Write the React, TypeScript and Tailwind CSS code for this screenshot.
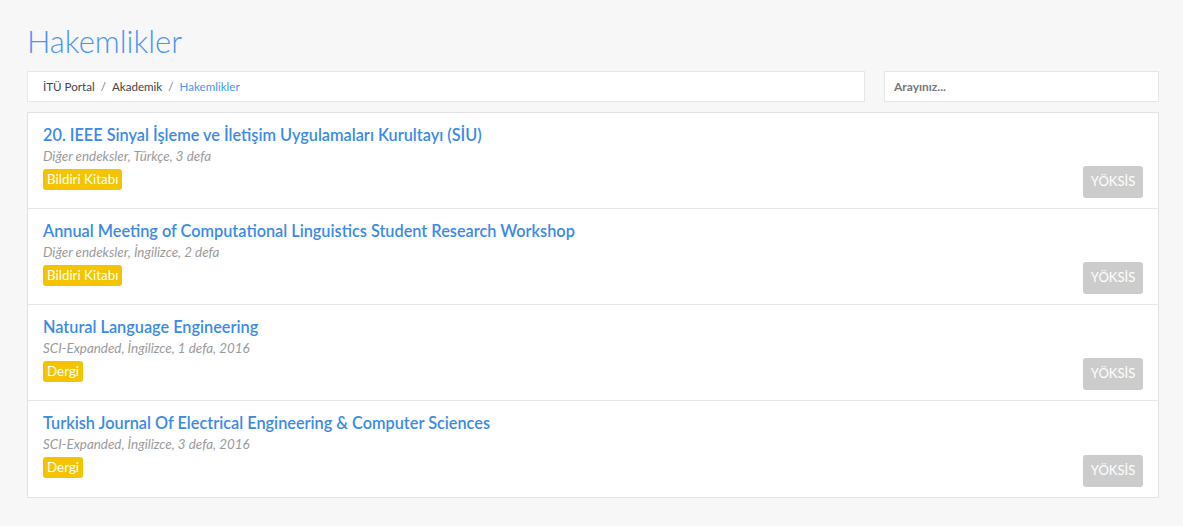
const items = [
  {
    title: "20. IEEE Sinyal İşleme ve İletişim Uygulamaları Kurultayı (SİU)",
    meta: "Diğer endeksler, Türkçe, 3 defa",
    type: "Bildiri Kitabı",
  },
  {
    title: "Annual Meeting of Computational Linguistics Student Research Workshop",
    meta: "Diğer endeksler, İngilizce, 2 defa",
    type: "Bildiri Kitabı",
  },
  {
    title: "Natural Language Engineering",
    meta: "SCI-Expanded, İngilizce, 1 defa, 2016",
    type: "Dergi",
  },
  {
    title: "Turkish Journal Of Electrical Engineering & Computer Sciences",
    meta: "SCI-Expanded, İngilizce, 3 defa, 2016",
    type: "Dergi",
  },
];

function Item({ title, meta, type }: { title: string; meta: string; type: string }) {
  return (
    <div className="flex h-[96px] items-end justify-between border-b border-[#e7e7e7] pl-[15px] pr-[15px] last:border-b-0">
      <div className="self-start pt-[11px]">
        <a href="#" className="block text-[16.3px] leading-[22px] font-semibold text-[#3b8ae6]">
          {title}
        </a>
        <div className="mt-[1px] text-[13.4px] leading-[19px] italic text-[#9a9a9a]">{meta}</div>
        <span className="mt-[1px] inline-block rounded-[3px] bg-[#f5c400] px-[4px] text-[13.4px] leading-[21px] text-white">
          {type}
        </span>
      </div>
      <button className="mb-[10px] h-[32px] w-[60px] rounded-[3px] bg-[#cccccc] text-[13px] text-white">YÖKSİS</button>
    </div>
  );
}

export default function App() {
  return (
    <div className="min-h-[526px] bg-[#f7f7f7] pl-[27px] pr-[24px] pt-[22px] pb-[28px] font-['Lato','Open_Sans',sans-serif]">
      <h1 className="text-[31px] leading-[38px] font-light text-[#4b95ef]">Hakemlikler</h1>
      <div className="mt-[11px] flex gap-[19px]">
        <div className="flex h-[31px] flex-1 items-center border border-[#e6e6e6] bg-white px-[15px] text-[11.6px] text-[#444]">
          <span>İTÜ Portal</span>
          <span className="px-[6px] text-[#777]">/</span>
          <span>Akademik</span>
          <span className="px-[6px] text-[#777]">/</span>
          <span className="text-[#4b95ef]">Hakemlikler</span>
        </div>
        <input
          placeholder="Arayınız..."
          className="h-[31px] w-[275px] border border-[#e6e6e6] bg-white px-[9px] text-[12px] font-bold outline-none placeholder:text-[#777]"
        />
      </div>
      <div className="mt-[10px] border border-[#e2e2e2] bg-white">
        {items.map((it) => (
          <Item key={it.title} {...it} />
        ))}
      </div>
    </div>
  );
}
